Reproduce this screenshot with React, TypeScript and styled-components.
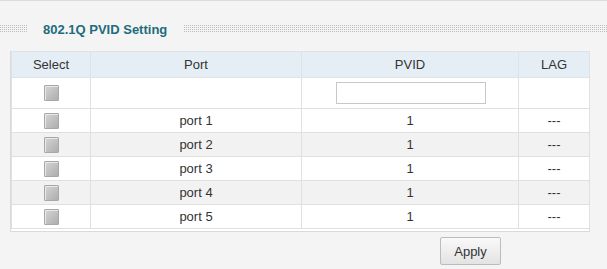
import React from "react";
import styled, { createGlobalStyle } from "styled-components";

const GlobalStyle = createGlobalStyle`
  html, body {
    margin: 0;
    padding: 0;
    background: #f4f4f4;
  }
  body {
    font-family: "Liberation Sans", Arial, sans-serif;
    color: #333;
  }
`;

const ports = [
  { name: "port 1", pvid: 1, lag: "---" },
  { name: "port 2", pvid: 1, lag: "---" },
  { name: "port 3", pvid: 1, lag: "---" },
  { name: "port 4", pvid: 1, lag: "---" },
  { name: "port 5", pvid: 1, lag: "---" },
];

const App = () => {
  return (
    <>
      <GlobalStyle />
      <Panel>
        <TitleRow>
          <Dots $width="28px" />
          <Title>802.1Q PVID Setting</Title>
          <Dots />
        </TitleRow>
        <TableWrap>
          <Table>
            <colgroup>
              <col style={{ width: 79 }} />
              <col style={{ width: 211 }} />
              <col style={{ width: 217 }} />
              <col style={{ width: 71 }} />
            </colgroup>
            <thead>
              <tr>
                <Th>Select</Th>
                <Th>Port</Th>
                <Th>PVID</Th>
                <Th>LAG</Th>
              </tr>
            </thead>
            <tbody>
              <EditRow>
                <Td><Check /></Td>
                <Td></Td>
                <Td><PvidInput type="text" /></Td>
                <Td></Td>
              </EditRow>
              {ports.map((p, i) => (
                <Row key={p.name} $striped={i % 2 === 1}>
                  <Td><Check /></Td>
                  <Td>{p.name}</Td>
                  <Td>{p.pvid}</Td>
                  <Td>{p.lag}</Td>
                </Row>
              ))}
            </tbody>
          </Table>
        </TableWrap>
        <Footer>
          <ApplyButton>Apply</ApplyButton>
        </Footer>
      </Panel>
    </>
  );
};

export default App;

const Panel = styled.div`
  width: 607px;
  height: 269px;
  box-sizing: border-box;
  border-top: 1px solid #dcdcdc;
  background: #f4f4f4;
  overflow: hidden;
`;

const TitleRow = styled.div`
  display: flex;
  align-items: center;
  height: 34px;
  margin-top: 11px;
  margin-bottom: 5px;
`;

const Dots = styled.div<{ $width?: string }>`
  flex: ${(p) => (p.$width ? `0 0 ${p.$width}` : "1")};
  height: 8px;
  background-color: #bdbdbd;
  background-image:
    linear-gradient(90deg, transparent 1px, #f4f4f4 1px),
    linear-gradient(transparent 1px, #f4f4f4 1px);
  background-size: 2px 2px;
`;

const Title = styled.div`
  padding: 0 17px 0 15px;
  font-size: 13px;
  font-weight: bold;
  color: #226b7c;
  white-space: nowrap;
`;

const TableWrap = styled.div`
  margin: 0 17px 0 10px;
  border: 1px solid #dadada;
  border-top: none;
  padding-bottom: 2px;
  background: #fff;
`;

const Table = styled.table`
  width: 100%;
  border-collapse: collapse;
  table-layout: fixed;
  font-size: 13px;
`;

const Th = styled.th`
  height: 25px;
  background: #e6eef5;
  border: 1px solid #dde3e8;
  font-weight: normal;
  color: #333;
  text-align: center;
  padding: 0;
`;

const Td = styled.td`
  height: 23px;
  border: 1px solid #e0e0e0;
  text-align: center;
  padding: 0;
  vertical-align: middle;
`;

const EditRow = styled.tr`
  background: #fff;
  td {
    height: 30px;
  }
`;

const Row = styled.tr<{ $striped: boolean }>`
  background: ${(p) => (p.$striped ? "#f2f2f2" : "#fff")};
`;

const Check = styled.span`
  display: inline-block;
  width: 13px;
  height: 14px;
  vertical-align: middle;
  border: 1px solid #a8a8a8;
  border-radius: 1px;
  background: linear-gradient(135deg, #d6d6d6 0%, #bdbdbd 60%, #aeaeae 100%);
  box-shadow: inset 1px 1px 0 #e8e8e8;
`;

const PvidInput = styled.input`
  box-sizing: border-box;
  width: 150px;
  height: 22px;
  border: 1px solid #c8c8c8;
  background: #fff;
  vertical-align: middle;
  outline: none;
  margin-left: 1px;
`;

const Footer = styled.div`
  display: flex;
  justify-content: flex-start;
  padding: 5px 0 0 440px;
`;

const ApplyButton = styled.button`
  width: 61px;
  height: 28px;
  font-family: "Liberation Sans", Arial, sans-serif;
  font-size: 13px;
  color: #333;
  border: 1px solid #bcbcbc;
  border-radius: 2px;
  background: linear-gradient(#f9f9f9, #e3e3e3);
  cursor: pointer;
  padding: 0;
`;
